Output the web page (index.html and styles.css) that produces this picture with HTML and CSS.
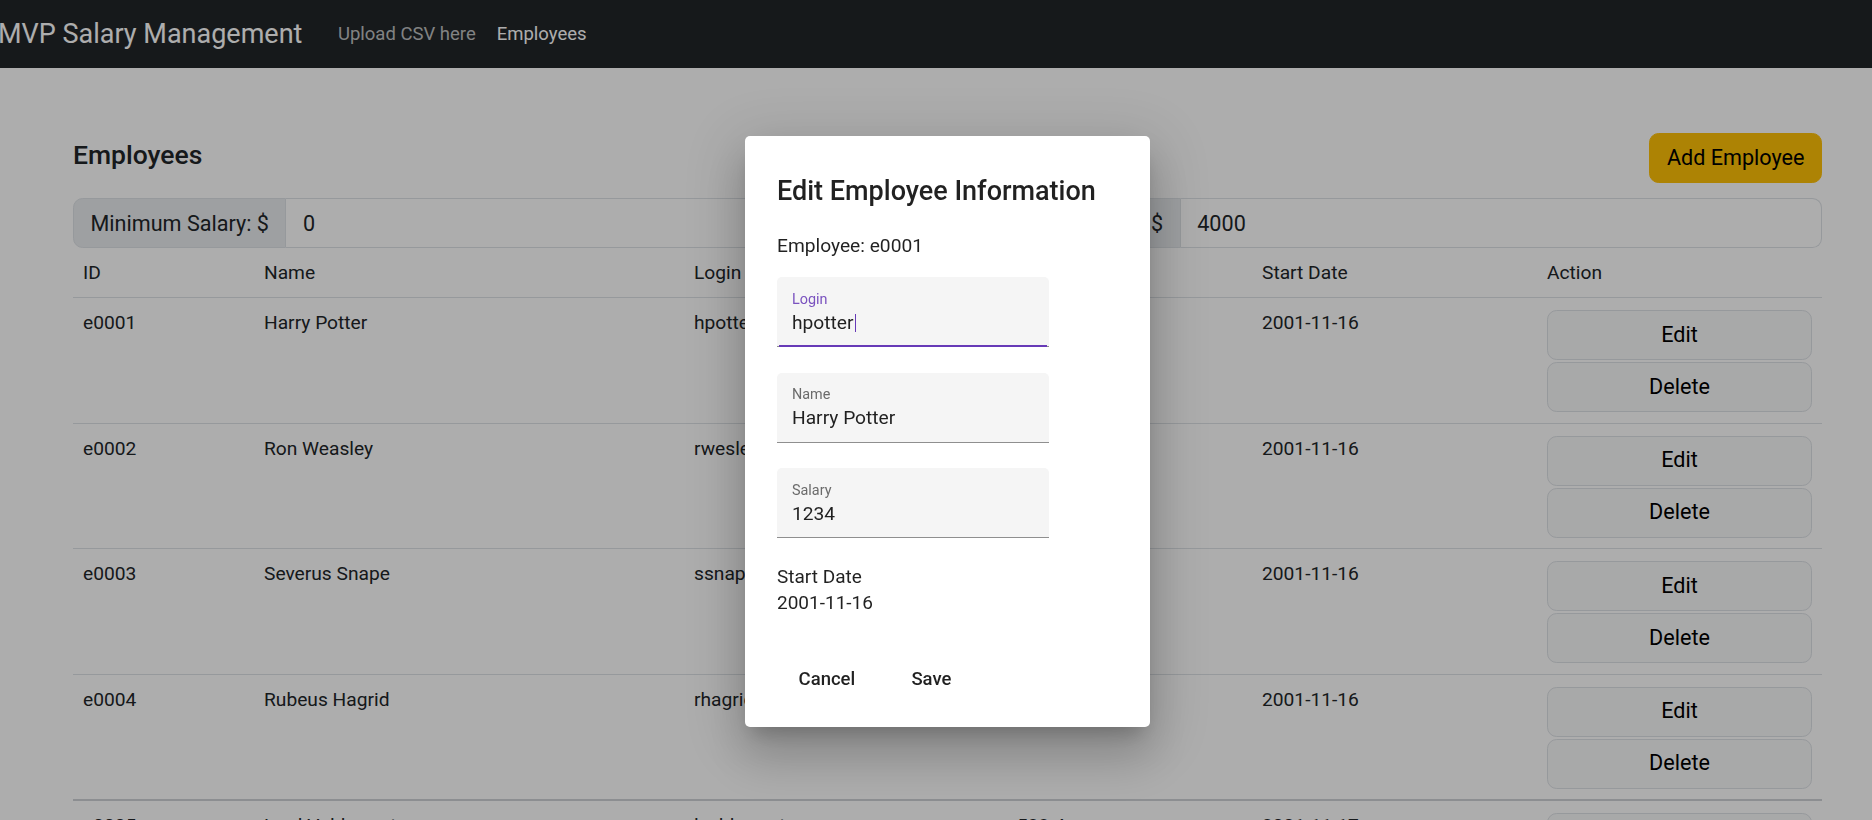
FILE: index.html
```html
<!DOCTYPE html>
<html lang="en">
<head>
<meta charset="utf-8">
<title>MVP Salary Management</title>
<link rel="stylesheet" href="styles.css">
</head>
<body>
<nav class="navbar">
  <span class="brand">MVP Salary Management</span>
  <a class="nav-link">Upload CSV here</a>
  <a class="nav-link active">Employees</a>
</nav>

<main class="page">
  <div class="page-head">
    <h3 class="page-title">Employees</h3>
    <button class="btn-add">Add Employee</button>
  </div>

  <div class="filters">
    <div class="input-group">
      <span class="ig-label">Minimum Salary: $</span>
      <span class="ig-input">0</span>
    </div>
    <div class="input-group">
      <span class="ig-label">Maximum Salary: $</span>
      <span class="ig-input">4000</span>
    </div>
  </div>

  <table class="emp-table">
    <colgroup>
      <col class="c-id"><col class="c-name"><col class="c-login"><col class="c-salary"><col class="c-date"><col class="c-action">
    </colgroup>
    <thead>
      <tr><th>ID</th><th>Name</th><th>Login</th><th>Salary</th><th>Start Date</th><th>Action</th></tr>
    </thead>
    <tbody>
      <tr>
        <td>e0001</td><td>Harry Potter</td><td>hpotter</td><td>1234</td><td>2001-11-16</td>
        <td><button class="btn-row">Edit</button><button class="btn-row">Delete</button></td>
      </tr>
      <tr>
        <td>e0002</td><td>Ron Weasley</td><td>rwesley</td><td>19234.5</td><td>2001-11-16</td>
        <td><button class="btn-row">Edit</button><button class="btn-row">Delete</button></td>
      </tr>
      <tr>
        <td>e0003</td><td>Severus Snape</td><td>ssnape</td><td>4000.0</td><td>2001-11-16</td>
        <td><button class="btn-row">Edit</button><button class="btn-row">Delete</button></td>
      </tr>
      <tr class="row-sep">
        <td>e0004</td><td>Rubeus Hagrid</td><td>rhagrid</td><td>3999.999</td><td>2001-11-16</td>
        <td><button class="btn-row">Edit</button><button class="btn-row">Delete</button></td>
      </tr>
      <tr>
        <td>e0005</td><td>Lord Voldemort</td><td>lvoldemort</td><td>523.4</td><td>2001-11-17</td>
        <td><button class="btn-row">Edit</button><button class="btn-row">Delete</button></td>
      </tr>
    </tbody>
  </table>
</main>

<div class="backdrop"></div>

<div class="dialog">
  <h2 class="dialog-title">Edit Employee Information</h2>
  <p class="dialog-text">Employee: e0001</p>

  <div class="field focused">
    <span class="field-label">Login</span>
    <span class="field-value">hpotter<span class="caret"></span></span>
  </div>
  <div class="field">
    <span class="field-label">Name</span>
    <span class="field-value">Harry Potter</span>
  </div>
  <div class="field">
    <span class="field-label">Salary</span>
    <span class="field-value">1234</span>
  </div>

  <div class="date-block">
    <div>Start Date</div>
    <div>2001-11-16</div>
  </div>

  <div class="dialog-actions">
    <button class="dlg-btn">Cancel</button>
    <button class="dlg-btn">Save</button>
  </div>
</div>
</body>
</html>
```

FILE: styles.css
```css
* { box-sizing: border-box; }

html, body { overflow: hidden; }

body {
  margin: 0;
  font-family: Roboto, "Liberation Sans", sans-serif;
  color: #212529;
  background: #fff;
}

/* navbar */
.navbar {
  height: 68px;
  background: #212529;
  display: flex;
  align-items: center;
}
.brand {
  font-size: 27px;
  color: #fff;
  margin-left: -2px;
  margin-right: 25px;
  white-space: nowrap;
}
.nav-link {
  font-size: 18.5px;
  padding: 0 10.5px;
  color: rgba(255, 255, 255, 0.72);
  white-space: nowrap;
}
.nav-link.active { color: #fff; }

/* page */
.page { padding: 0 50px 0 73px; }

.page-head {
  display: flex;
  justify-content: space-between;
  align-items: center;
  height: 50px;
  margin-top: 65px;
}
.page-title {
  font-size: 26.5px;
  font-weight: 500;
  line-height: 1.2;
  margin: 0 0 6px;
}
.btn-add {
  font-family: Roboto, "Liberation Sans", sans-serif;
  font-size: 21.6px;
  line-height: 32.4px;
  padding: 7.8px 16.5px;
  color: #000;
  background: #ffc107;
  border: 1px solid #ffc107;
  border-radius: 9.6px;
}

.filters {
  display: flex;
  gap: 29px;
  margin-top: 15px;
}
.input-group {
  flex: 1;
  display: flex;
  height: 50px;
  font-size: 21.6px;
}
.ig-label {
  display: flex;
  align-items: center;
  padding: 0 16.5px;
  background: #e9ecef;
  border: 1px solid #dee2e6;
  border-radius: 9.6px 0 0 9.6px;
  white-space: nowrap;
}
.ig-input {
  flex: 1;
  display: flex;
  align-items: center;
  padding: 0 16.5px;
  background: #fff;
  border: 1px solid #dee2e6;
  border-left: 0;
  border-radius: 0 9.6px 9.6px 0;
}

/* table */
.emp-table {
  width: 100%;
  border-collapse: collapse;
  table-layout: fixed;
  font-size: 19.2px;
  line-height: 29px;
}
.c-id { width: 181px; }
.c-name { width: 430px; }
.c-login { width: 323px; }
.c-salary { width: 245px; }
.c-date { width: 285px; }
.c-action { width: 285px; }

.emp-table th,
.emp-table td {
  padding: 10px;
  text-align: left;
  vertical-align: top;
  font-weight: 400;
  border-bottom: 1px solid #dee2e6;
}
.emp-table td { padding-bottom: 10.5px; }
.emp-table .row-sep td { border-bottom: 2px solid #cfd2d6; }

.btn-row {
  display: block;
  width: 100%;
  height: 50px;
  margin-top: 2px;
  font-family: Roboto, "Liberation Sans", sans-serif;
  font-size: 21.6px;
  line-height: 32.4px;
  color: #000;
  background: #f8f9fa;
  border: 1px solid #dee2e6;
  border-radius: 9.6px;
}

/* overlay */
.backdrop {
  position: fixed;
  inset: 0;
  background: rgba(0, 0, 0, 0.32);
}

.dialog {
  position: fixed;
  left: 745px;
  top: 136px;
  width: 405px;
  padding: 39px 32px 25.8px;
  background: #fff;
  border-radius: 5px;
  color: rgba(0, 0, 0, 0.87);
  box-shadow: 0 13px 18px -8px rgba(0, 0, 0, 0.2),
              0 29px 46px 4px rgba(0, 0, 0, 0.14),
              0 11px 55px 10px rgba(0, 0, 0, 0.12);
}
.dialog-title {
  font-size: 27px;
  font-weight: 500;
  line-height: 32px;
  margin: 0 0 25px;
}
.dialog-text {
  font-size: 19.2px;
  line-height: 28px;
  margin: 0 0 17px;
}

.field {
  position: relative;
  display: flex;
  flex-direction: column;
  width: 272px;
  height: 70px;
  margin-bottom: 25.6px;
  padding: 13.6px 15px 0;
  background: #f5f5f5;
  border-radius: 5px 5px 0 0;
  border-bottom: 1px solid #8f8f8f;
}
.field:last-of-type { margin-bottom: 0; }
.field-label {
  font-size: 14.4px;
  line-height: 17px;
  color: #6b6b6b;
}
.field-value {
  margin-top: 3px;
  font-size: 19.2px;
  line-height: 24px;
  color: rgba(0, 0, 0, 0.87);
}
.field.focused .field-label { color: #7a52bf; }
.field.focused::after {
  content: "";
  position: absolute;
  left: 2px;
  right: 2px;
  bottom: -1px;
  height: 2.5px;
  background: #673ab7;
}
.caret {
  display: inline-block;
  width: 1.5px;
  height: 18px;
  margin-left: 1px;
  vertical-align: -3px;
  background: #673ab7;
}

.date-block {
  margin-top: 24.7px;
  font-size: 19px;
  line-height: 26.6px;
}

.dialog-actions {
  display: flex;
  gap: 37px;
  margin: 41.1px 0 0 12px;
}
.dlg-btn {
  height: 43px;
  line-height: 43px;
  padding: 0 9.6px;
  font-family: Roboto, "Liberation Sans", sans-serif;
  font-size: 18.5px;
  font-weight: 500;
  color: rgba(0, 0, 0, 0.87);
  background: none;
  border: 0;
}
```
